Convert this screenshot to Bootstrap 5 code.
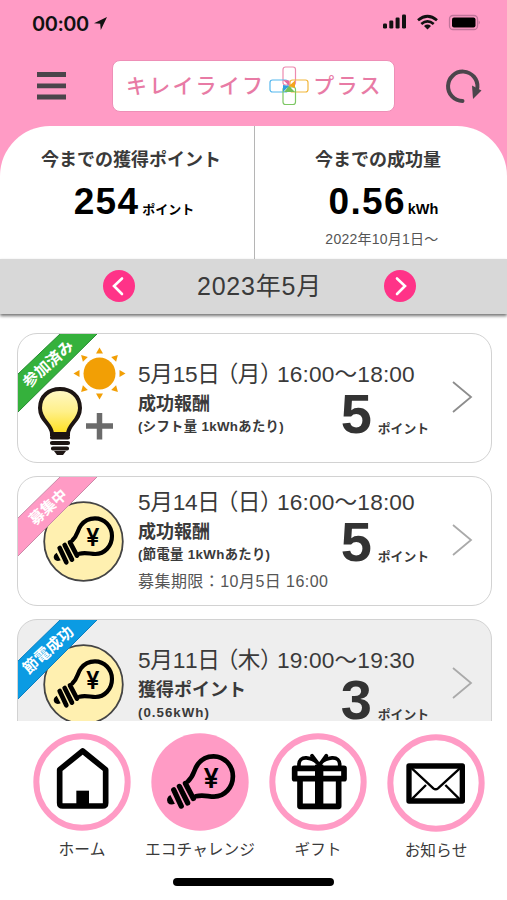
<!DOCTYPE html>
<html lang="ja">
<head>
<meta charset="utf-8">
<meta name="viewport" content="width=device-width, initial-scale=1">
<title>キレイライフプラス</title>
<link href="https://cdn.jsdelivr.net/npm/bootstrap@5.3.0/dist/css/bootstrap.min.css" rel="stylesheet">
<style>
  body { width: 507px; height: 900px; background: #fff; color: #3a3a3a; line-height: 1; font-kerning: none;
    font-family: "Liberation Sans", "Noto Sans CJK JP", sans-serif; white-space: nowrap; }
  svg { display: block; flex: none; }
  .app { height: 900px; }
  .hero { background: #ff9bc5; height: 126px; flex: none; }
  .status { height: 46px; padding: 0 26px 0 32px; color: #111; }
  .clock { font-family: Inter, sans-serif; font-size: 20px; font-weight: 600; letter-spacing: -.5px; margin-top: 2px; }
  .topbar { height: 80px; padding: 0 25px 1px 37px; }
  .menu-icon { margin-right: 46px; }
  .logo { width: 283px; height: 52px; border-radius: 8px; border: 1px solid #ee8fb7; color: #e87ba5;
    font-size: 21px; font-weight: 500; letter-spacing: 2.2px; padding-left: 13px; }
  .logo svg { margin: 0 4px 0 4px; }
  .summary-wrap { background: #ff9bc5; flex: none; }
  .summary { height: 133px; background: #fff; border-radius: 50px 50px 0 0; }
  .summary > div { padding-top: 25px; }
  .s-left { width: 255px; border-right: 1px solid #b5b5b5; padding-left: 8px; }
  .s-right { width: 252px; padding-right: 6px; }
  .s-title { font-size: 18px; font-weight: 700; line-height: 18px; }
  .s-num { font-size: 37px; font-weight: 700; color: #000; line-height: 36px; margin-top: 15px; letter-spacing: 1.3px; }
  .s-left .s-num { padding-left: 6px; }
  .s-right .s-num { padding-left: 11px; }
  .s-unit { font-size: 13px; font-weight: 700; color: #000; margin-left: 3px; letter-spacing: 0; }
  .s-unit.latin { font-size: 14.5px; margin-left: 2px; }
  .s-since { font-size: 14px; color: #555; margin-top: 3px; line-height: 18px; letter-spacing: .25px; padding-left: 8px; }
  .month { height: 55px; background: #d8d8d8; padding: 0 91px 1px 103px; box-shadow: 0 2px 3px rgba(0,0,0,.55); flex: none; position: relative; }
  .month-name { font-size: 25px; letter-spacing: .8px; }
  .list { height: 407px; padding: 19px 15px 0 17px; gap: 13px; flex: none; }
  .event { height: 130px; flex: none; border: 1px solid #d2d2d2; border-radius: 20px; overflow: hidden; background: #fff; }
  .event.done { background: #eee; }
  .art { margin: -1px 0 0 -1px; width: 121px; }
  .info { width: 291px; padding-top: 27px; }
  .info.tight { padding-top: 12px; }
  .date { font-size: 22.7px; line-height: 26px; letter-spacing: -.3px; }
  .weekday { margin: 0 -5px 0 -4px; letter-spacing: -.6px; }
  .hours { letter-spacing: .15px; }
  .reward { font-size: 18px; font-weight: 700; line-height: 18px; margin-top: 8px; }
  .cond { font-size: 13.3px; font-weight: 700; line-height: 14px; margin-top: 7px; letter-spacing: .35px; }
  .cond.wide { letter-spacing: 1px; }
  .limit { font-size: 16px; line-height: 18px; color: #555; margin-top: 11px; letter-spacing: .45px; }
  .pts { margin-top: 8px; height: 38px; }
  .big { font-size: 56px; font-weight: 700; line-height: 38px; color: #333; }
  .pts-unit { font-size: 12.8px; font-weight: 700; margin-left: 6px; }
  .go { margin: 46px 16px 0 auto; }
  .tabs { height: 137px; padding: 12px 12px 0 23px; flex: none; background: #fff; }
  .tab { width: 118px; }
  .tab-name { font-size: 15.7px; line-height: 18px; margin-top: 10px; }
  .tabs .tab:last-child { padding-top: 1px; }
  .homebar { width: 161px; height: 8px; border-radius: 4px; background: #000; margin: 20px 0 0 173px; }
</style>
<script src="https://cdn.jsdelivr.net/npm/bootstrap@5.3.0/dist/js/bootstrap.bundle.min.js"></script>
</head>
<body>
<svg width="0" height="0" class="position-absolute" aria-hidden="true">
  <defs>
    <g id="yenbulb">
      <g fill="none" stroke="#000" stroke-linecap="round">
        <path stroke-width="12.500" d="M55 73C72 58 69 44 81 28C91 14 106 7 123 7C151 7 174 31 174 60C174 90 152 114 124 114C108 114 96 108 76 113"/>
        <path stroke-width="14" d="M48 79L69 119M32 87L54 131M17 96L37 139"/>
      </g>
      <path d="M8 110Q-5 118 1 130Q8 138 20 133Z"/>
      <text x="116" y="91" font-size="72" font-weight="600" text-anchor="middle" font-family="Inter, sans-serif">¥</text>
    </g>
    <g id="yenbadge">
      <circle cx="66.5" cy="65.5" r="39.3" fill="#fff0b0" stroke="#444" stroke-width="1.8"/>
      <use href="#yenbulb" transform="translate(37 40) scale(.3333)"/>
    </g>
    <linearGradient id="glow" x1="0" y1="0" x2="0" y2="1"><stop offset="0" stop-color="#fff8c8"/><stop offset=".5" stop-color="#fff08a"/><stop offset="1" stop-color="#ffdf1c"/></linearGradient>
  </defs>
</svg>
<div class="app d-flex flex-column overflow-hidden">
  <header class="hero">
    <div class="status d-flex align-items-center">
      <span class="clock">00:00</span>
      <svg class="ms-1" width="15" height="15" viewBox="0 0 15 15"><path d="M14 1L1 7.2L7.2 7.8L7.8 14Z" fill="#111"/></svg>
      <svg class="ms-auto" width="98" height="18" viewBox="0 0 98 18">
        <g fill="#111"><rect x="0" y="9.500" width="4" height="5" rx="1.200"/><rect x="6.300" y="6.500" width="4" height="8" rx="1.200"/><rect x="12.600" y="3.500" width="4" height="11" rx="1.200"/><rect x="19" y=".5" width="4" height="14" rx="1.200"/></g>
        <g fill="none" stroke="#111" stroke-width="2.700"><path d="M35 6.300Q44.500-1.800 54 6.300M38.300 10Q44.500 4.800 50.700 10"/></g><path d="M41 12Q44.500 9.200 48 12L44.500 15.500Z" fill="#111"/>
        <rect x="66.500" y="1.500" width="28" height="14" rx="3.500" fill="none" stroke="#c0749a" stroke-width="1.300"/><rect x="69" y="3.500" width="23.500" height="10" rx="2" fill="#000"/><path d="M95.700 6.500Q98 8.500 95.700 10.500Z" fill="#c0749a"/>
      </svg>
    </div>
    <div class="topbar d-flex align-items-center">
      <svg class="menu-icon" width="29" height="29" viewBox="0 0 29 29"><path d="M0 3.500H29M0 14.800H29M0 26H29" stroke="#4b454b" stroke-width="4.800"/></svg>
      <div class="logo d-flex align-items-center bg-white">
        <span>キレイライフ</span>
        <svg width="40" height="40" viewBox="0 0 40 40" fill="none" stroke-width="1.200">
          <rect x="14" y="1" width="12.500" height="18" rx="2.500" stroke="#ed8ab0"/><rect x="1" y="14" width="18" height="12" rx="2.500" stroke="#55b7ee"/>
          <rect x="21" y="14" width="18" height="12" rx="2.500" stroke="#f2b73c"/><rect x="14" y="21" width="12.500" height="17.500" rx="2.500" stroke="#7cc763"/>
          <path d="M14 14L20.500 14.500V20Z" fill="#e86a9c"/><path d="M14 19L20 20L14 26Z" fill="#2f9fe0"/><path d="M20 20L26 14.500V22Z" fill="#f3a51c"/><path d="M20 20L26 26H15Z" fill="#72c05a"/>
        </svg>
        <span>プラス</span>
      </div>
      <svg class="ms-auto" width="37" height="36" viewBox="0 0 37 36"><path d="M17.500 33A14.700 14.700 0 1 1 32.400 19.500" fill="none" stroke="#4b454b" stroke-width="4" stroke-linecap="round"/><path d="M27 17.500L36.500 22.500L28 31Z" fill="#4b454b"/></svg>
    </div>
  </header>
  <div class="summary-wrap">
    <section class="summary d-flex text-center">
      <div class="s-left">
        <div class="s-title">今までの獲得ポイント</div>
        <div class="s-num d-flex justify-content-center align-items-baseline"><span>254</span><span class="s-unit">ポイント</span></div>
      </div>
      <div class="s-right">
        <div class="s-title">今までの成功量</div>
        <div class="s-num d-flex justify-content-center align-items-baseline"><span>0.56</span><span class="s-unit latin">kWh</span></div>
        <div class="s-since">2022年10月1日〜</div>
      </div>
    </section>
  </div>
  <nav class="month d-flex align-items-center justify-content-between">
    <svg width="32" height="32" viewBox="0 0 32 32"><circle cx="16" cy="16" r="16" fill="#ff3388"/><path d="M19 8.500L11 16L19 24" fill="none" stroke="#fff" stroke-width="2.600" stroke-linecap="round"/></svg>
    <span class="month-name">2023年5月</span>
    <svg width="32" height="32" viewBox="0 0 32 32"><circle cx="16" cy="16" r="16" fill="#ff3388"/><path d="M13 8.500L21 16L13 24" fill="none" stroke="#fff" stroke-width="2.600" stroke-linecap="round"/></svg>
  </nav>
  <main class="list d-flex flex-column overflow-hidden">
    <article class="event d-flex">
      <svg class="art" width="121" height="130" viewBox="0 0 121 130">
        <path d="M44 0H81L0 80V42Z" fill="#35b13c" stroke="#258a32" stroke-width="1"/>
        <text transform="translate(32 32) rotate(-42)" y="4" text-anchor="middle" font-size="15.500" font-weight="700" fill="#fff">参加済み</text>
        <g transform="translate(82.500 40.500)" fill="#f29f05"><circle r="16"/>
          <path id="ray" d="M-3.500-20L0-26L3.500-20Z"/><use href="#ray" transform="rotate(45)"/><use href="#ray" transform="rotate(90)"/><use href="#ray" transform="rotate(135)"/><use href="#ray" transform="rotate(180)"/><use href="#ray" transform="rotate(225)"/><use href="#ray" transform="rotate(270)"/><use href="#ray" transform="rotate(315)"/></g>
        <path d="M35 101C35 91 23 88 23 75C23 63 32 56 43 56S63 63 63 75C63 88 51 91 51 101Z" fill="url(#glow)" stroke="#1d1513" stroke-width="4"/>
        <path d="M35 104.500H51M35 110H51M36 115.500H50" stroke="#1d1513" stroke-width="4.200" stroke-linecap="round"/><path d="M37 118H49L46 122H40Z" fill="#1d1513"/>
        <path d="M69 93H96M82.500 80V106.500" stroke="#6b6b6b" stroke-width="5.500"/>
      </svg>
      <div class="info">
        <div class="date">5月15日<span class="weekday">（月）</span><span class="hours">16:00〜18:00</span></div>
        <div class="d-flex justify-content-between">
          <div><div class="reward">成功報酬</div><div class="cond">(シフト量 1kWhあたり)</div></div>
          <div class="pts d-flex align-items-baseline"><span class="big">5</span><span class="pts-unit">ポイント</span></div>
        </div>
      </div>
      <svg class="go" width="24" height="34" viewBox="0 0 24 34"><path d="M2 2L20 17L2 32" fill="none" stroke="#8d8d8d" stroke-width="1.800"/></svg>
    </article>
    <article class="event d-flex">
      <svg class="art" width="121" height="130" viewBox="0 0 121 130">
        <use href="#yenbadge"/>
        <path d="M44 0H81L0 81V43Z" fill="#ff9bc5" stroke="#c98aa8" stroke-width="1"/>
        <text transform="translate(32 32) rotate(-42)" y="4" text-anchor="middle" font-size="15" font-weight="700" fill="#fff">募集中</text>
      </svg>
      <div class="info tight">
        <div class="date">5月14日<span class="weekday">（日）</span><span class="hours">16:00〜18:00</span></div>
        <div class="d-flex justify-content-between">
          <div><div class="reward">成功報酬</div><div class="cond">(節電量 1kWhあたり)</div></div>
          <div class="pts d-flex align-items-baseline"><span class="big">5</span><span class="pts-unit">ポイント</span></div>
        </div>
        <div class="limit">募集期限：10月5日 16:00</div>
      </div>
      <svg class="go" width="24" height="34" viewBox="0 0 24 34"><path d="M2 2L20 17L2 32" fill="none" stroke="#aaa" stroke-width="1.800"/></svg>
    </article>
    <article class="event done d-flex">
      <svg class="art" width="121" height="130" viewBox="0 0 121 130">
        <use href="#yenbadge"/>
        <path d="M44 0H81L0 81V43Z" fill="#0b9be3" stroke="#0a7fc0" stroke-width="1"/>
        <text transform="translate(32 32) rotate(-42)" y="4" text-anchor="middle" font-size="15.500" font-weight="700" fill="#fff">節電成功</text>
      </svg>
      <div class="info">
        <div class="date">5月11日<span class="weekday">（木）</span><span class="hours">19:00〜19:30</span></div>
        <div class="d-flex justify-content-between">
          <div><div class="reward">獲得ポイント</div><div class="cond wide">(0.56kWh)</div></div>
          <div class="pts d-flex align-items-baseline"><span class="big">3</span><span class="pts-unit">ポイント</span></div>
        </div>
      </div>
      <svg class="go" width="24" height="34" viewBox="0 0 24 34"><path d="M2 2L20 17L2 32" fill="none" stroke="#aaa" stroke-width="1.800"/></svg>
    </article>
  </main>
  <footer class="tabs d-flex text-center">
    <div class="tab d-flex flex-column align-items-center">
      <svg width="98" height="98" viewBox="-147 -147 294 294"><circle r="137" fill="#fff" stroke="#ff9bc5" stroke-width="18"/>
        <path d="M2-93L71-37V63Q71 72 62 72H-58Q-67 72-67 63V-37Z" fill="none" stroke="#000" stroke-width="17" stroke-linejoin="round"/><path d="M-17 26H21V72H-17Z"/></svg>
      <span class="tab-name">ホーム</span>
    </div>
    <div class="tab d-flex flex-column align-items-center">
      <svg width="98" height="98" viewBox="-147 -147 294 294"><circle r="146" fill="#ff9bc5"/><use href="#yenbulb" transform="translate(-98 -85) scale(1.13)"/></svg>
      <span class="tab-name">エコチャレンジ</span>
    </div>
    <div class="tab d-flex flex-column align-items-center">
      <svg width="98" height="98" viewBox="-147 -147 294 294"><circle r="137" fill="#fff" stroke="#ff9bc5" stroke-width="18"/>
        <g fill="none" stroke="#000" stroke-linejoin="round" stroke-linecap="round"><path stroke-width="17" d="M-70-41H78V-10H-70ZM-54-10H62V73H-54Z"/><path stroke-width="11" d="M-57-48C-60-85-15-75 3-52C22-75 68-85 65-48M-18-79L4-50L25-79"/></g><path d="M-9-52H16V73H-9Z"/></svg>
      <span class="tab-name">ギフト</span>
    </div>
    <div class="tab d-flex flex-column align-items-center">
      <svg width="98" height="98" viewBox="-147 -147 294 294"><circle r="137" fill="#fff" stroke="#ff9bc5" stroke-width="18"/>
        <g fill="none" stroke="#000" stroke-linejoin="round"><path stroke-width="16" d="M-81-51H79V54H-81Z"/><path stroke-width="7" d="M-75-46L-8 16Q-1 22 6 16L74-46M-74 50L-30 6M72 50L28 6"/></g></svg>
      <span class="tab-name">お知らせ</span>
    </div>
  </footer>
  <div class="homebar"></div>
</div>
</body>
</html>
